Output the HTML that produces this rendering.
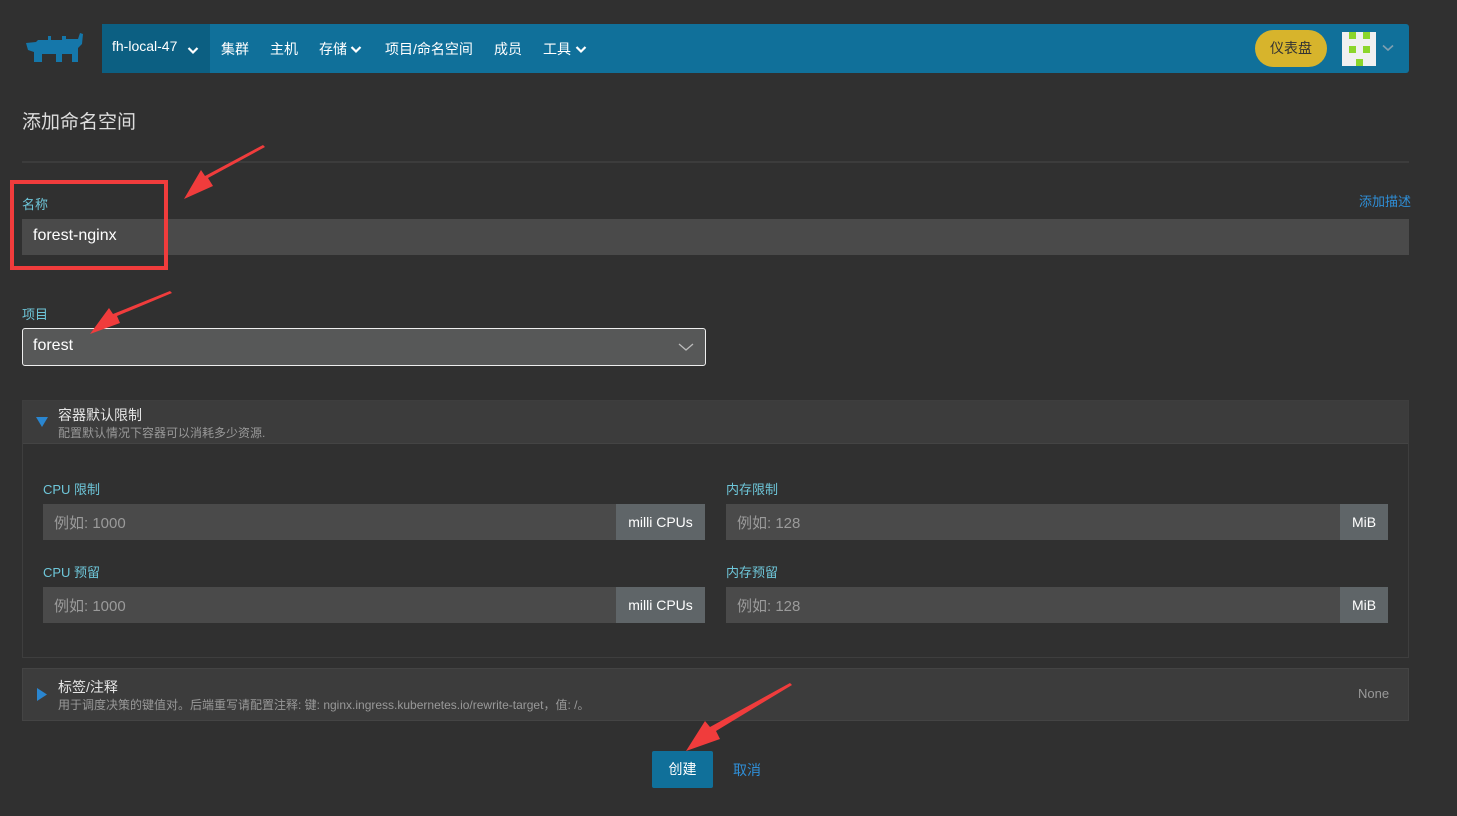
<!DOCTYPE html>
<html><head><meta charset="utf-8"><style>
*{margin:0;padding:0;box-sizing:border-box}
body{width:1457px;height:816px;background:#303030;font-family:"Liberation Sans","Noto Sans CJK SC",sans-serif;color:#ddd;position:relative;overflow:hidden}
.a{position:absolute}
.nav{left:102px;top:24px;width:1307px;height:49px;background:#10709a;border-radius:0 3px 3px 0}
.cl{left:102px;top:24px;width:108px;height:49px;background:#0c5f82}
.ni{top:39px;font-size:14px;color:#fff;white-space:nowrap}
.lab{font-size:13px;color:#6ec6d9}
.inp{background:#4a4a4a;height:36px}
.ph{font-size:15px;color:#9a9a9a}
.add{background:#5f6568;height:36px;color:#fff;font-size:14px;line-height:36px;text-align:center}
.chev{position:absolute;top:45px}
</style></head><body>
<svg class="a" style="left:22px;top:32px" width="68" height="34" viewBox="0 0 68 34"><path d="M4 11 L14 10 L16 8 L26 8 L26 4 L29 4 L29 8 L40 8 L40 4 L44 4 L44 7 L56 7 L58 1 L61 2 L60 12 L56 16 L56 30 L50 30 L50 22 L40 22 L40 30 L34 30 L34 22 L20 22 L20 30 L12 30 L12 20 L6 18 Z" fill="#1577aa"/></svg>
<div class="a nav"></div><div class="a cl"></div>
<div class="a ni" style="left:112px;top:38px">fh-local-47</div>
<svg class="chev" style="left:187px;top:46px" width="12" height="9"><path d="M1.5 2 L6 6.5 L10.5 2" stroke="#fff" stroke-width="2.2" fill="none"/></svg>
<div class="a ni" style="left:221px">集群</div>
<div class="a ni" style="left:270px">主机</div>
<div class="a ni" style="left:319px">存储</div>
<svg class="chev" style="left:350px" width="12" height="9"><path d="M1.5 2 L6 6.5 L10.5 2" stroke="#fff" stroke-width="2.2" fill="none"/></svg>
<div class="a ni" style="left:385px">项目/命名空间</div>
<div class="a ni" style="left:494px">成员</div>
<div class="a ni" style="left:543px">工具</div>
<svg class="chev" style="left:575px" width="12" height="9"><path d="M1.5 2 L6 6.5 L10.5 2" stroke="#fff" stroke-width="2.2" fill="none"/></svg>
<div class="a" style="left:1255px;top:30px;width:72px;height:37px;border-radius:19px;background:#d7b42c;color:#333;font-size:14px;line-height:37px;text-align:center">仪表盘</div>
<div class="a" style="left:1342px;top:32px;width:34px;height:34px;background:#f0f0f0"><div class="a" style="left:7px;top:0;width:7px;height:7px;background:#8bd62a"></div><div class="a" style="left:21px;top:0;width:7px;height:7px;background:#8bd62a"></div><div class="a" style="left:7px;top:14px;width:7px;height:7px;background:#8bd62a"></div><div class="a" style="left:21px;top:14px;width:7px;height:7px;background:#8bd62a"></div><div class="a" style="left:14px;top:27px;width:7px;height:7px;background:#8bd62a"></div></div>
<svg class="a" style="left:1382px;top:44px" width="12" height="8"><path d="M1 1.5 L6 6 L11 1.5" stroke="#7f9fb0" stroke-width="1.6" fill="none"/></svg>

<div class="a" style="left:22px;top:107px;font-size:19px;color:#ddd">添加命名空间</div>
<div class="a" style="left:22px;top:161px;width:1387px;height:2px;background:#3c3c3c"></div>
<div class="a lab" style="left:22px;top:194px">名称</div>
<div class="a" style="left:1359px;top:191px;font-size:13px;color:#2f8fd8">添加描述</div>
<div class="a inp" style="left:22px;top:219px;width:1387px"></div>
<div class="a" style="left:33px;top:227px;font-size:16px;color:#fff">forest-nginx</div>
<div class="a" style="left:10px;top:180px;width:158px;height:90px;border:4px solid #f03c3c"></div>
<div class="a lab" style="left:22px;top:304px">项目</div>
<div class="a" style="left:22px;top:328px;width:684px;height:38px;background:#575858;border:1px solid #eee;border-radius:3px"></div>
<div class="a" style="left:33px;top:337px;font-size:16px;color:#fff">forest</div>
<svg class="a" style="left:678px;top:342px" width="16" height="10"><path d="M1 2 L8 8 L15 2" stroke="#bbb" fill="none" stroke-width="1.3"/></svg>

<div class="a" style="left:22px;top:400px;width:1387px;height:258px;border:1px solid #3e3e3e"></div>
<div class="a" style="left:23px;top:401px;width:1385px;height:43px;background:#3c3c3c;border-bottom:1px solid #444"></div>
<svg class="a" style="left:36px;top:417px" width="12" height="10"><path d="M0 0 L12 0 L6 10Z" fill="#2a86d0"/></svg>
<div class="a" style="left:58px;top:405px;font-size:14px;color:#e6e6e6">容器默认限制</div>
<div class="a" style="left:58px;top:424px;font-size:12px;color:#999">配置默认情况下容器可以消耗多少资源.</div>
<div class="a lab" style="left:43px;top:479px">CPU 限制</div>
<div class="a lab" style="left:726px;top:479px">内存限制</div>
<div class="a inp" style="left:43px;top:504px;width:573px"></div><div class="a add" style="left:616px;top:504px;width:89px">milli CPUs</div>
<div class="a inp" style="left:726px;top:504px;width:614px"></div><div class="a add" style="left:1340px;top:504px;width:48px">MiB</div>
<div class="a ph" style="left:54px;top:512px">例如: 1000</div><div class="a ph" style="left:737px;top:512px">例如: 128</div>
<div class="a lab" style="left:43px;top:562px">CPU 预留</div>
<div class="a lab" style="left:726px;top:562px">内存预留</div>
<div class="a inp" style="left:43px;top:587px;width:573px"></div><div class="a add" style="left:616px;top:587px;width:89px">milli CPUs</div>
<div class="a inp" style="left:726px;top:587px;width:614px"></div><div class="a add" style="left:1340px;top:587px;width:48px">MiB</div>
<div class="a ph" style="left:54px;top:595px">例如: 1000</div><div class="a ph" style="left:737px;top:595px">例如: 128</div>

<div class="a" style="left:22px;top:668px;width:1387px;height:53px;background:#3c3c3c;border:1px solid #444"></div>
<svg class="a" style="left:37px;top:688px" width="10" height="13"><path d="M0 0 L10 6.5 L0 13Z" fill="#2a86d0"/></svg>
<div class="a" style="left:58px;top:677px;font-size:14px;color:#e6e6e6">标签/注释</div>
<div class="a" style="left:58px;top:696px;font-size:12px;color:#999">用于调度决策的键值对。后端重写请配置注释: 键: nginx.ingress.kubernetes.io/rewrite-target，值: /。</div>
<div class="a" style="left:1358px;top:686px;font-size:13px;color:#999">None</div>

<div class="a" style="left:652px;top:751px;width:61px;height:37px;background:#10709a;color:#fff;font-size:14px;line-height:37px;text-align:center;border-radius:2px">创建</div>
<div class="a" style="left:733px;top:760px;font-size:14px;color:#2f8fd8">取消</div>

<svg class="a" style="left:0;top:0" width="1457" height="816">
<g fill="#f03c3c">
<polygon points="265,147 208,178 213,186 184,199 201,170 205,176 263,145"/>
<polygon points="172,293 117,316 120,323 90,334 109,308 113,314 170,291"/>
<polygon points="792,685 716,731 720,739 686,751 705,721 710,727 790,683"/>
</g></svg>
</body></html>
